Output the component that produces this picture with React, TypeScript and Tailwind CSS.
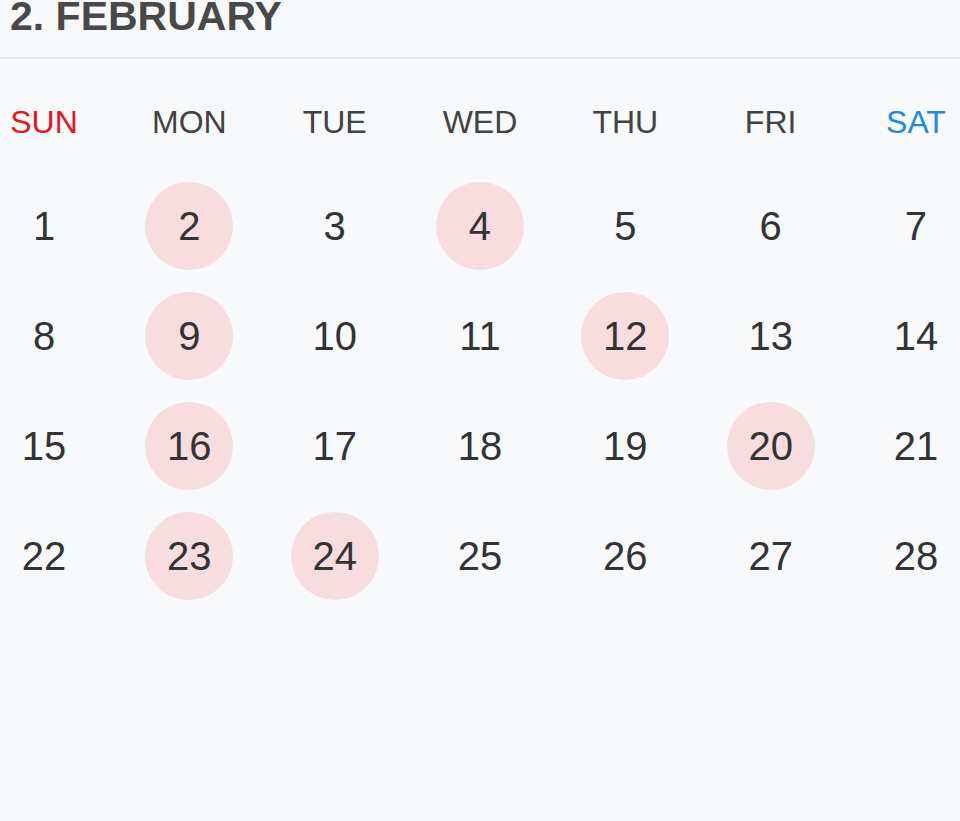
import React from 'react'

const weekdays = ['SUN', 'MON', 'TUE', 'WED', 'THU', 'FRI', 'SAT']
const marked = new Set([2, 4, 9, 12, 16, 20, 23, 24])

const weeks: number[][] = [0, 1, 2, 3].map((w) =>
  Array.from({ length: 7 }, (_, d) => w * 7 + d + 1)
)

function dayColor(i: number) {
  if (i === 0) return 'text-[#e8141c]'
  if (i === 6) return 'text-[#1b8ae6]'
  return 'text-[#424242]'
}

export default function App() {
  return (
    <div
      className="w-[960px] h-[821px] overflow-hidden bg-[#f8f9fb]"
      style={{ fontFamily: "'Liberation Sans', Arial, sans-serif" }}
    >
      {/* Month title */}
      <header className="h-[59px] flex flex-col border-b-2 border-[#e6e7ea] px-[10px]">
        <h1 className="-mt-[4px] text-[41px] leading-[41px] font-bold text-[#484848]">
          2. FEBRUARY
        </h1>
      </header>

      {/* Weekday names */}
      <div className="mt-[47px] flex justify-between">
        {weekdays.map((d, i) => (
          <div
            key={d}
            className={`w-[88px] text-center text-[32px] leading-[32px] ${dayColor(i)}`}
          >
            {d}
          </div>
        ))}
      </div>

      {/* Days */}
      <div className="mt-[44px] flex flex-col gap-[22px]">
        {weeks.map((week, wi) => (
          <div key={wi} className="flex justify-between">
            {week.map((n) => (
              <div
                key={n}
                className={`w-[88px] h-[88px] rounded-full flex items-center justify-center text-[40px] text-[#333333] ${
                  marked.has(n) ? 'bg-[#f7dce0]' : ''
                }`}
              >
                {n}
              </div>
            ))}
          </div>
        ))}
      </div>
    </div>
  )
}
